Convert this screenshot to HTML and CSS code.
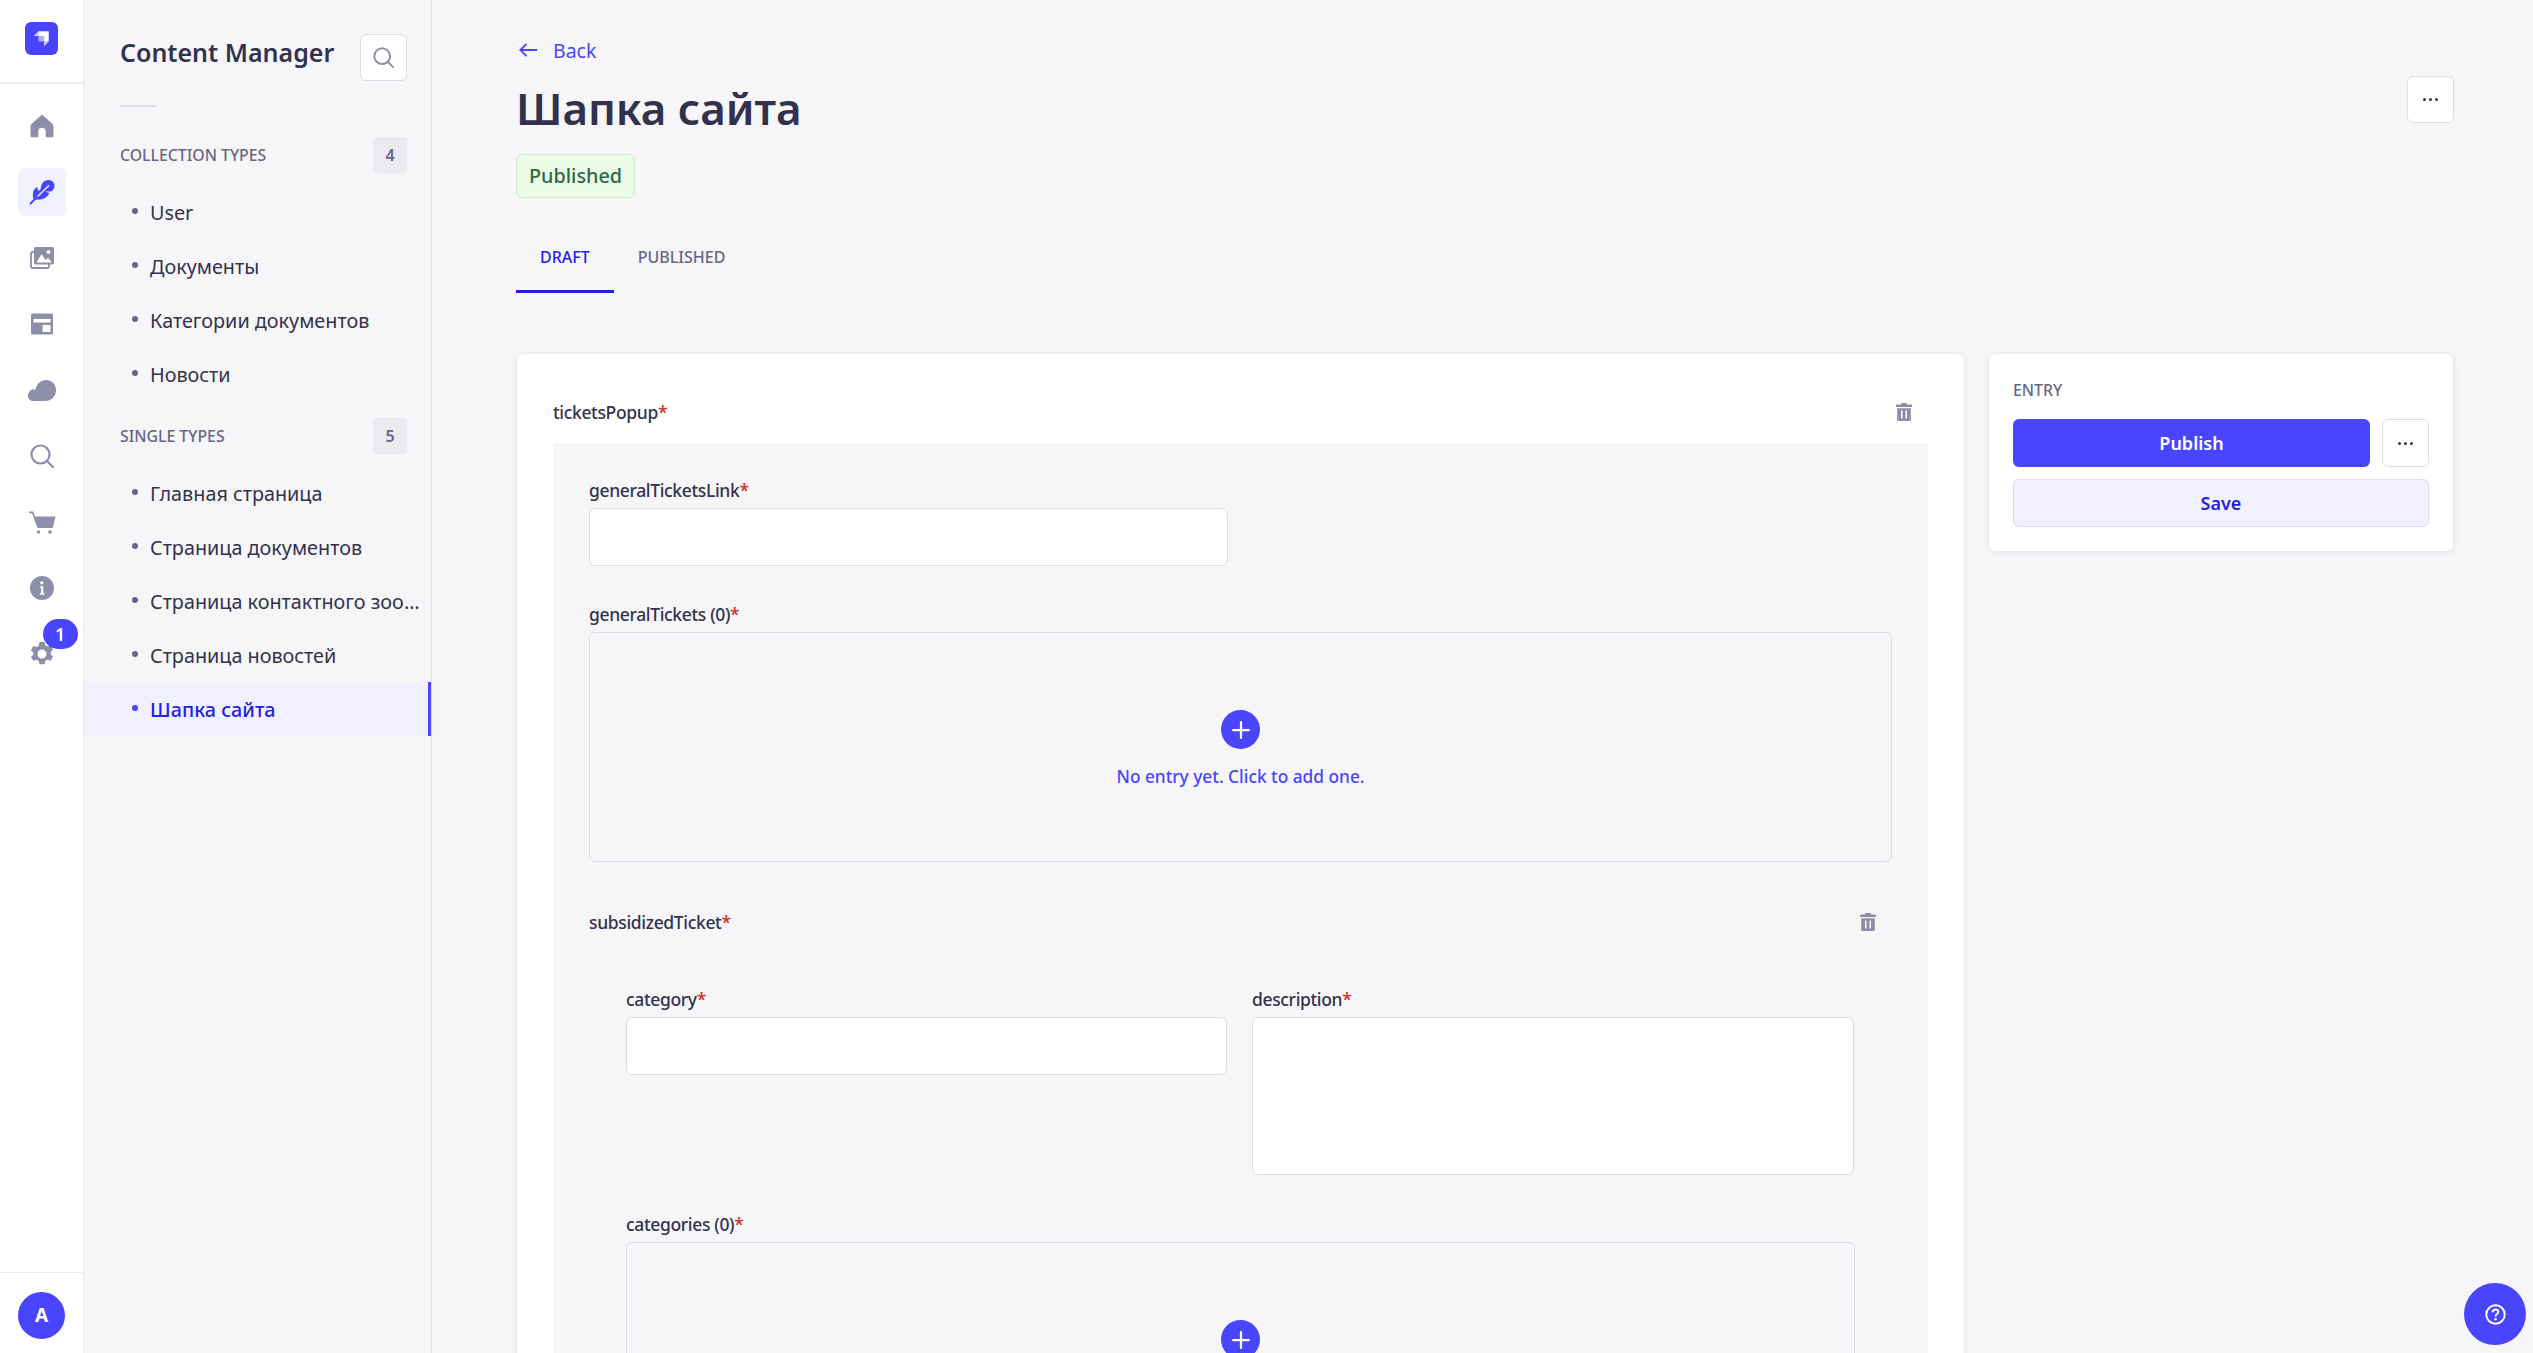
FILE: index.html
```html
<!DOCTYPE html>
<html lang="en">
<head>
  <meta charset="UTF-8" />
  <meta name="viewport" content="width=device-width, initial-scale=1.0" />
  <title>Content Manager</title>
  <link rel="stylesheet" href="styles.css">
</head>
<body>
  <div class="app">
    <!-- Icon rail -->
    <nav class="rail">
      <div class="rail-top">
        <svg class="logo" viewBox="0 0 32 32"><rect width="32" height="32" rx="6" fill="#4945ff"/><path d="M23 9H13v4.500h5.500V19H23z" fill="#fff"/><path d="M13 9v4.500H8.500z" fill="#fff" opacity=".75"/><path d="M13 13.500h5.500V19H14a1 1 0 0 1-1-1z" fill="#fff" opacity=".55"/><path d="M18.500 19v4.500L23 19z" fill="#fff" opacity=".75"/></svg>
      </div>
      <div class="rail-links">
        <a class="rail-link"><svg viewBox="0 0 24 24" class="rail-icon"><path d="M12 .5 1.700 9.800C.9 10.500.5 11.300.5 12.300v9.200c0 1 .8 1.800 1.800 1.800h5c.6 0 1-.4 1-1v-4.800a3.700 3.700 0 0 1 7.400 0v4.800c0 .6.400 1 1 1h5c1 0 1.800-.8 1.800-1.800v-9.200c0-1-.4-1.800-1.200-2.500z"/></svg></a>
        <a class="rail-link active"><svg viewBox="0 0 26 26" class="rail-icon feather-icon"><path d="M4.500 20C3 15 4 10.500 8 8l1.500 4 2-1.500C12 6 14 1 19.500 1 23 1 25.500 3.500 25.500 7c0 2.500-1.500 4.500-3.500 5.500h-6l4.500 1.500C18.500 18.500 12 22.500 4.500 20z"/><path class="vein" d="M8 18 20 6.500"/><path class="stem" d="M1.500 24.500 8 18"/></svg></a>
        <a class="rail-link"><svg viewBox="0 0 24 22" class="rail-icon media-icon"><rect class="media-back" x="1" y="5" width="18" height="16" rx="1.500"/><rect x="4" y="0" width="20" height="17.500" rx="1.500"/><circle class="media-cut" cx="18.500" cy="5" r="2"/><path class="media-cut" d="M6.500 15.500 11.500 7l4 6 2.500-2 4 4.500z"/></svg></a>
        <a class="rail-link"><svg viewBox="0 0 24 24" class="rail-icon"><path fill-rule="evenodd" d="M2.500 1.500h19c.8 0 1.500.7 1.500 1.500v18c0 .8-.7 1.500-1.500 1.500h-19c-.8 0-1.500-.7-1.500-1.500V3c0-.8.700-1.500 1.500-1.500zM3.500 7v3.500h17V7zm9 6v7h8v-7z"/></svg></a>
        <a class="rail-link"><svg viewBox="0 0 28 21" class="rail-icon cloud-icon"><path d="M5 21C2 21 0 18.500 0 16c0-3.500 2.500-6.500 6-7l1 2C8 5 12 0 18 0c6 0 10 4.500 10 10 0 6.500-4.500 11-11 11z"/></svg></a>
        <a class="rail-link"><svg viewBox="0 0 24 24" class="rail-icon search-icon"><circle cx="10.500" cy="10.500" r="9"/><path d="m17 17 6 6"/></svg></a>
        <a class="rail-link"><svg viewBox="0 0 28 24" class="rail-icon cart-icon"><path d="M1 1.500h4.200l1.800 5h20.500l-2.500 10.500a1.300 1.300 0 0 1-1.300 1H10.500a1.500 1.500 0 0 1-1.400-1L4 3.200H1z"/><circle cx="10.500" cy="22" r="1.800"/><circle cx="22" cy="22" r="1.800"/></svg></a>
        <a class="rail-link"><svg viewBox="0 0 24 24" class="rail-icon"><path fill-rule="evenodd" d="M12 0a12 12 0 1 1 0 24 12 12 0 0 1 0-24zm-.2 5.200a1.600 1.600 0 1 0 0 3.200 1.600 1.600 0 0 0 0-3.200zM9.800 10.300v1.500h1.200v5.500H9.800v1.500h4.700v-1.500h-1.200v-7z"/></svg></a>
        <a class="rail-link settings-link">
          <svg viewBox="0 0 26 26" class="rail-icon gear-icon"><path fill-rule="evenodd" d="M10.500 1h5l.8 3.300 2 1.100 3.300-1 2.500 4.300-2.400 2.300v2.200l2.400 2.300-2.500 4.300-3.300-1-2 1.100-.8 3.300h-5l-.8-3.300-2-1.100-3.300 1L1.900 16l2.400-2.300v-2.200L1.900 9.200l2.500-4.300 3.300 1 2-1.100zM13 8.500a4.500 4.500 0 1 0 0 9 4.500 4.500 0 0 0 0-9z"/></svg>
          <span class="rail-badge">1</span>
        </a>
      </div>
      <div class="rail-bottom">
        <span class="avatar">A</span>
      </div>
    </nav>

    <!-- Content types menu -->
    <aside class="sidenav">
      <div class="sidenav-head">
        <h2>Content Manager</h2>
        <button class="icon-btn search-btn"><svg viewBox="0 0 24 24" class="search-icon"><circle cx="10.500" cy="10.500" r="9"/><path d="m17 17 6 6"/></svg></button>
      </div>
      <div class="sidenav-rule"></div>

      <div class="group-head"><span>Collection Types</span><b class="count">4</b></div>
      <ul class="group">
        <li>User</li>
        <li>Документы</li>
        <li>Категории документов</li>
        <li>Новости</li>
      </ul>

      <div class="group-head"><span>Single Types</span><b class="count">5</b></div>
      <ul class="group">
        <li>Главная страница</li>
        <li>Страница документов</li>
        <li><span class="clip">Страница контактного зоопарка</span></li>
        <li>Страница новостей</li>
        <li class="current">Шапка сайта</li>
      </ul>
    </aside>

    <!-- Edit view -->
    <main class="main">
      <header class="page-head">
        <a class="back"><svg viewBox="0 0 20 16"><path d="M8 1.500 1.500 8 8 14.500M2 8h17"/></svg>Back</a>
        <div class="title-row">
          <h1>Шапка сайта</h1>
          <button class="icon-btn dots-btn"><span class="dots"><i></i><i></i><i></i></span></button>
        </div>
        <span class="status">Published</span>
        <div class="tabs">
          <a class="tab selected">Draft</a>
          <a class="tab">Published</a>
        </div>
      </header>

      <div class="columns">
        <section class="card form-card">
          <div class="comp-head">
            <label class="label">ticketsPopup<em>*</em></label>
            <svg class="trash" viewBox="0 0 16 18"><path d="M5.500 0h5l.7 1.500H15c.6 0 1 .4 1 1V4H0V2.500c0-.6.400-1 1-1h3.800zM1.200 5.200h13.600V16.500c0 .8-.7 1.500-1.500 1.500H2.700c-.8 0-1.500-.7-1.500-1.500zM5 7.500v8h1.500v-8zm4.500 0v8H11v-8z" fill-rule="evenodd"/></svg>
          </div>
          <div class="comp-body">
            <div class="field half">
              <label class="label">generalTicketsLink<em>*</em></label>
              <div class="input"></div>
            </div>

            <div class="field">
              <label class="label">generalTickets (0)<em>*</em></label>
              <div class="empty-zone">
                <span class="add"><svg viewBox="0 0 16 16"><path d="M8 1v14M1 8h14"/></svg></span>
                <span class="add-text">No entry yet. Click to add one.</span>
              </div>
            </div>

            <div class="comp-head sub-head">
              <label class="label">subsidizedTicket<em>*</em></label>
              <svg class="trash" viewBox="0 0 16 18"><path d="M5.500 0h5l.7 1.500H15c.6 0 1 .4 1 1V4H0V2.500c0-.6.400-1 1-1h3.800zM1.200 5.200h13.600V16.500c0 .8-.7 1.500-1.500 1.500H2.700c-.8 0-1.500-.7-1.500-1.500zM5 7.500v8h1.500v-8zm4.500 0v8H11v-8z" fill-rule="evenodd"/></svg>
            </div>
            <div class="nested">
              <div class="two-col">
                <div class="field">
                  <label class="label">category<em>*</em></label>
                  <div class="input"></div>
                </div>
                <div class="field">
                  <label class="label">description<em>*</em></label>
                  <div class="input textarea"></div>
                </div>
              </div>
              <div class="field">
                <label class="label">categories (0)<em>*</em></label>
                <div class="empty-zone">
                  <span class="add"><svg viewBox="0 0 16 16"><path d="M8 1v14M1 8h14"/></svg></span>
                  <span class="add-text">No entry yet. Click to add one.</span>
                </div>
              </div>
            </div>
          </div>
        </section>

        <section class="card entry-card">
          <div class="entry-title">Entry</div>
          <div class="entry-row">
            <button class="btn-publish">Publish</button>
            <button class="icon-btn dots-btn"><span class="dots"><i></i><i></i><i></i></span></button>
          </div>
          <button class="btn-save">Save</button>
        </section>
      </div>
    </main>
  </div>

  <button class="help"><svg viewBox="0 0 20 20"><circle cx="10" cy="10" r="8.800"/><path d="M7.300 7.800C7.300 6.200 8.500 5.200 10 5.200s2.700 1 2.700 2.400c0 2-2.700 2-2.700 4.200"/><circle class="help-dot" cx="10" cy="14.500" r="1.200"/></svg></button>
</body>
</html>
```

FILE: styles.css
```css
* {
  box-sizing: border-box;
}

html, body {
  height: 100%;
  margin: 0;
}

body {
  font-family: "Noto Sans", "Open Sans", sans-serif;
  font-size: 21px;
  color: #32324d;
  background-color: #f6f6f9;
  overflow: hidden;
}

h1, h2, ul {
  margin: 0;
  padding: 0;
}

button {
  font-family: inherit;
  padding: 0;
  cursor: pointer;
}

.app {
  display: flex;
  height: 100vh;
}

/* rail */
.rail {
  width: 84px;
  flex: none;
  display: flex;
  flex-direction: column;
  align-items: stretch;
  background-color: #fff;
  border-right: 1px solid #eaeaef;
}
.rail-top {
  height: 84px;
  flex: none;
  display: flex;
  align-items: center;
  justify-content: center;
  border-bottom: 2px solid #eaeaef;
  padding-bottom: 5px;
}
.logo {
  width: 33px;
  height: 33px;
}
.rail-links {
  flex: 1;
  padding-top: 18px;
  display: flex;
  flex-direction: column;
  align-items: center;
  gap: 18px;
}
.rail-link {
  width: 48px;
  height: 48px;
  border-radius: 6px;
  display: flex;
  align-items: center;
  justify-content: center;
  position: relative;
}
.rail-link.active {
  background-color: #f0f0ff;
}
.rail-icon {
  width: 24px;
  height: 24px;
  fill: #8e8ea9;
}
.rail-link.active .rail-icon {
  fill: #4945ff;
}
.feather-icon {
  width: 26px;
  height: 26px;
}
.feather-icon .vein {
  fill: none;
  stroke: #f0f0ff;
  stroke-width: 1.400;
}
.feather-icon .stem {
  fill: none;
  stroke: #4945ff;
  stroke-width: 1.800;
  stroke-linecap: round;
}
.media-icon {
  height: 22px;
}
.media-back {
  fill: none;
  stroke: #8e8ea9;
  stroke-width: 1.800;
}
.media-icon .media-cut {
  fill: #fff;
}
.cloud-icon {
  width: 28px;
  height: 21px;
}
.cart-icon {
  width: 28px;
}
.gear-icon {
  width: 26px;
  height: 26px;
}
.search-icon {
  width: 24px;
  height: 24px;
  fill: none;
  stroke: #8e8ea9;
  stroke-width: 2.200;
  stroke-linecap: round;
}
.rail-badge {
  position: absolute;
  top: -11px;
  left: 25px;
  width: 35px;
  height: 30px;
  border-radius: 15px;
  background-color: #4945ff;
  color: #fff;
  font-size: 17px;
  font-weight: 600;
  display: flex;
  align-items: center;
  justify-content: center;
}
.rail-bottom {
  height: 81px;
  flex: none;
  border-top: 1px solid #eaeaef;
  padding-top: 4px;
  display: flex;
  align-items: center;
  justify-content: center;
}
.avatar {
  width: 47px;
  height: 47px;
  border-radius: 50%;
  background-color: #4945ff;
  color: #fff;
  font-size: 19px;
  font-weight: 700;
  display: flex;
  align-items: center;
  justify-content: center;
}

/* content types menu */
.sidenav {
  width: 348px;
  flex: none;
  border-right: 1px solid #dcdce4;
}
.sidenav-head {
  height: 81px;
  padding: 34px 24px 0 36px;
  display: flex;
  justify-content: space-between;
  align-items: flex-start;
}
.sidenav-head h2 {
  font-size: 25px;
  font-weight: 600;
  line-height: 36px;
}
.icon-btn {
  width: 47px;
  height: 47px;
  border: 1px solid #dcdce4;
  border-radius: 6px;
  background-color: #fff;
  display: flex;
  align-items: center;
  justify-content: center;
  flex: none;
}
.search-btn .search-icon {
  width: 21px;
  height: 21px;
}
.sidenav-rule {
  width: 36px;
  height: 2px;
  margin: 24px 0 0 36px;
  background-color: #dcdce4;
}
.group-head {
  height: 36px;
  margin-top: 30px;
  padding: 0 24px 0 36px;
  display: flex;
  justify-content: space-between;
  align-items: center;
  font-size: 15.800px;
  font-weight: 500;
  text-transform: uppercase;
  color: #666687;
}
.group + .group-head {
  margin-top: 17px;
}
.count {
  width: 34px;
  height: 36px;
  border-radius: 4px;
  background-color: #eaeaef;
  font-size: 16px;
  font-weight: 600;
  display: flex;
  align-items: center;
  justify-content: center;
}
.group {
  list-style: none;
  margin-top: 12px;
}
.group li {
  height: 54px;
  padding: 0 5px 0 66px;
  display: flex;
  align-items: center;
  position: relative;
  font-size: 19.800px;
}
.group li::before {
  content: "";
  position: absolute;
  left: 48px;
  top: 23px;
  width: 6px;
  height: 6px;
  border-radius: 50%;
  background-color: #666687;
}
.group li.current {
  background-color: #f0f0ff;
  border-right: 3px solid #4945ff;
  color: #271fe0;
  font-weight: 500;
}
.group li.current::before {
  background-color: #4945ff;
}
.clip {
  white-space: nowrap;
  overflow: hidden;
  text-overflow: ellipsis;
}

/* page header */
.main {
  flex: 1;
  min-width: 0;
  padding: 0 80px 0 85px;
}
.page-head {
  padding-top: 36px;
  height: 354px;
  margin: 0 -1px;
}
.back {
  display: flex;
  align-items: center;
  gap: 15px;
  height: 28px;
  padding-left: 3px;
  color: #4945ff;
  font-size: 19.500px;
}
.back svg {
  width: 19px;
  height: 16px;
  fill: none;
  stroke: #4945ff;
  stroke-width: 2;
}
.title-row {
  display: flex;
  justify-content: space-between;
  align-items: flex-start;
  height: 78px;
  margin-top: 12px;
}
.title-row h1 {
  font-size: 44px;
  font-weight: 600;
  line-height: 64px;
}
.dots-btn .dots {
  display: flex;
  gap: 3px;
}
.dots i {
  width: 3px;
  height: 3px;
  border-radius: 50%;
  background-color: #32324d;
}
.status {
  display: inline-block;
  height: 44px;
  line-height: 42px;
  padding: 0 12px;
  border: 1px solid #c6f0c2;
  border-radius: 6px;
  background-color: #eafbe7;
  color: #2f6846;
  font-size: 19.800px;
  font-weight: 500;
}
.tabs {
  display: flex;
  margin-top: 32px;
}
.tab {
  height: 63px;
  padding: 16px 24px 0;
  font-size: 16px;
  font-weight: 500;
  text-transform: uppercase;
  color: #666687;
  border-bottom: 3px solid transparent;
}
.tab.selected {
  color: #271fe0;
  border-bottom-color: #271fe0;
}

/* form */
.columns {
  display: flex;
  gap: 25px;
  align-items: flex-start;
}
.card {
  background-color: #fff;
  border-radius: 6px;
  box-shadow: 0 1px 6px rgba(33, 33, 52, 0.1);
}
.form-card {
  flex: 1;
  min-width: 0;
  padding: 36px 36px 0;
}
.entry-card {
  width: 464px;
  flex: none;
  padding: 24px;
  height: 197px;
}
.comp-head {
  display: flex;
  justify-content: space-between;
  align-items: center;
  height: 44px;
  margin-top: 0;
}
.trash {
  width: 16px;
  height: 18px;
  margin-right: 16px;
  fill: #8e8ea9;
}
.label {
  display: block;
  font-size: 17.500px;
  font-weight: 500;
  line-height: 24px;
  letter-spacing: -0.35px;
}
.label em {
  color: #d02b20;
  font-style: normal;
}
.comp-body {
  margin-top: 9px;
  background-color: #f6f6f9;
  padding: 35px 36px 0;
}
.field .label {
  margin-bottom: 6px;
}
.half {
  width: 639px;
}
.comp-body > .field + .field {
  margin-top: 36px;
}
.input {
  height: 58px;
  background-color: #fff;
  border: 1px solid #dcdce4;
  border-radius: 6px;
}
.textarea {
  height: 158px;
}
.empty-zone {
  height: 230px;
  border: 1px solid #dcdce4;
  border-radius: 6px;
  display: flex;
  flex-direction: column;
  align-items: center;
  padding-top: 77px;
}
.add {
  width: 39px;
  height: 39px;
  border-radius: 50%;
  background-color: #4945ff;
  display: flex;
  align-items: center;
  justify-content: center;
}
.add svg {
  width: 18px;
  height: 18px;
  fill: none;
  stroke: #fff;
  stroke-width: 2;
  stroke-linecap: round;
}
.add-text {
  margin-top: 16px;
  font-size: 17.300px;
  font-weight: 500;
  color: #4945ff;
}
.sub-head {
  margin-top: 38px;
}
.nested {
  padding: 43px 37px 0;
}
.two-col {
  display: grid;
  grid-template-columns: 601px 602px;
  gap: 25px;
  align-items: start;
}
.two-col + .field {
  margin-top: 37px;
}

/* entry panel */
.entry-title {
  font-size: 15.800px;
  font-weight: 500;
  text-transform: uppercase;
  color: #666687;
  line-height: 24px;
}
.entry-row {
  display: flex;
  gap: 12px;
  margin-top: 17px;
}
.btn-publish {
  flex: 1;
  height: 48px;
  border: none;
  border-radius: 6px;
  background-color: #4945ff;
  color: #fff;
  font-size: 18px;
  font-weight: 600;
}
.entry-row .dots-btn {
  height: 48px;
}
.btn-save {
  width: 100%;
  height: 48px;
  margin-top: 12px;
  border: 1px solid #d9d8ff;
  border-radius: 6px;
  background-color: #f0f0ff;
  color: #271fe0;
  font-size: 18px;
  font-weight: 600;
}

.help {
  position: fixed;
  right: 7px;
  bottom: 8px;
  width: 62px;
  height: 62px;
  border: none;
  border-radius: 50%;
  background-color: #4945ff;
  display: flex;
  align-items: center;
  justify-content: center;
}
.help svg {
  width: 21px;
  height: 21px;
  fill: none;
  stroke: #fff;
  stroke-width: 1.800;
}
.help .help-dot {
  fill: #fff;
  stroke: none;
}
```
